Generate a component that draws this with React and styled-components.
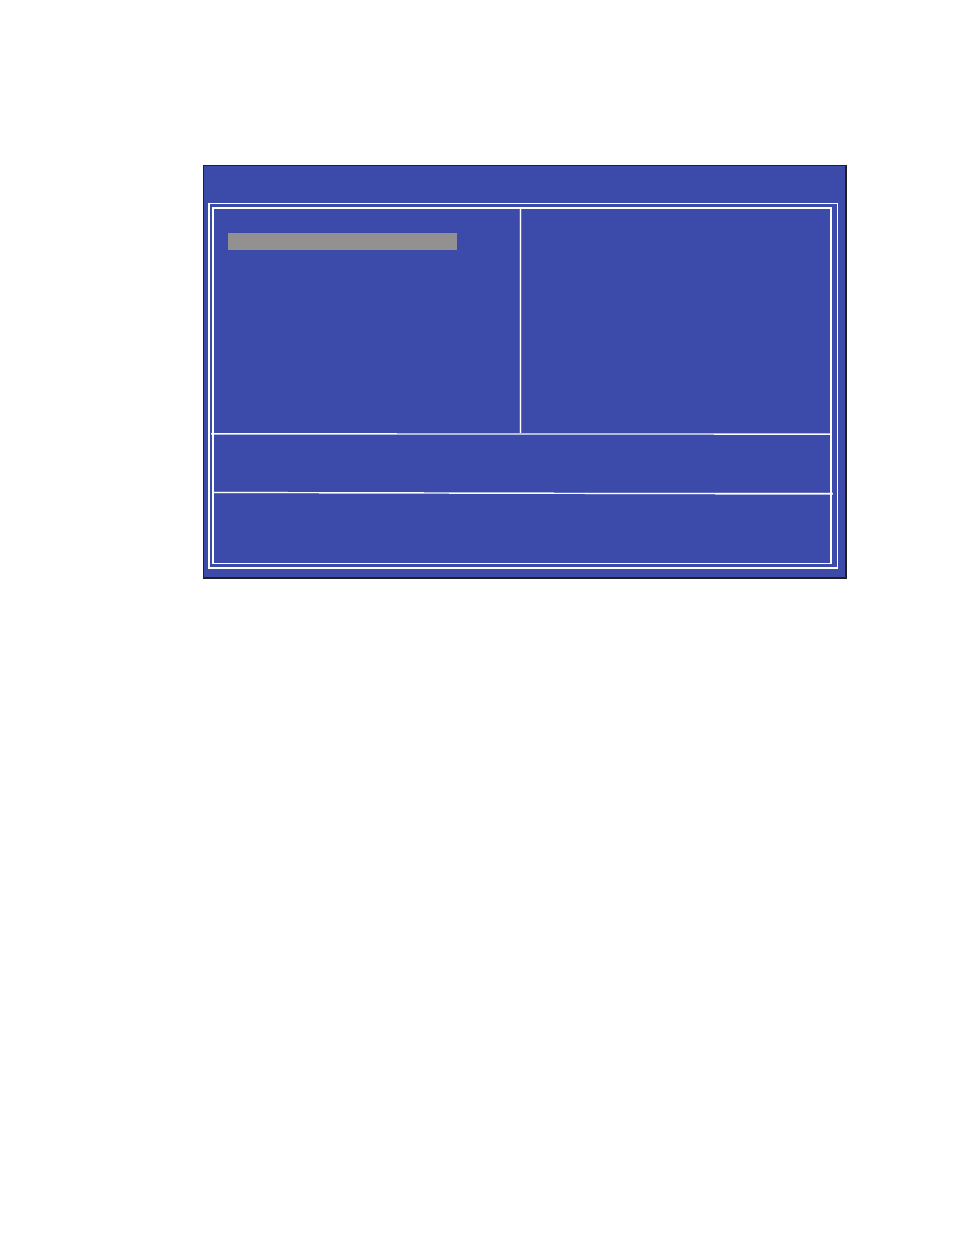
import React from "react";
import styled, { createGlobalStyle } from "styled-components";

const solid = "#ffffff";
const pale = "rgba(255, 255, 255, 0.62)";
const faint = "rgba(255, 255, 255, 0.2)";

const GlobalStyle = createGlobalStyle`
  body {
    margin: 0;
    background: #ffffff;
    font-family: "Liberation Mono", monospace;
  }
`;

const Page = styled.main`
  box-sizing: border-box;
  min-height: 100vh;
  padding: 165px 107px 40px 203px;
`;

const Screen = styled.section`
  background: #3c4ba9;
  border: solid #231f20;
  border-width: 1px 2px 2px 1px;
`;

const TitleBar = styled.header`
  height: 37px;
`;

const OuterFrame = styled.div`
  margin: 0 7px 8px 4px;
  padding: 3px 5px 3px 2px;
  border: solid #ffffff;
  border-width: 1px 1px 2px 2px;
`;

const InnerFrame = styled.div`
  border: solid #ffffff;
  border-width: 2px 2px 1px 2px;
`;

const Columns = styled.div`
  display: grid;
  grid-template-columns: 305px 3px 1fr;
  min-height: 224px;
`;

const MenuColumn = styled.nav`
  padding: 24px 62px 24px 14px;
`;

const SelectedItem = styled.div`
  height: 17px;
  background: #929090;
`;

const ColumnRule = styled.div`
  background: linear-gradient(
    to right,
    ${faint} 1px,
    ${solid} 1px 2px,
    ${faint} 2px
  );
`;

// The rules drift down slightly from left to right, one pixel row at a time.
const KeysRule = styled.div`
  height: 2px;
  margin: 0 -2px 0 -3px;
  background:
    linear-gradient(to right, ${solid} 30%, ${pale} 30%) 0 0 / 100% 1px no-repeat,
    linear-gradient(to right, ${pale} 81%, ${solid} 81%) 0 1px / 100% 1px no-repeat;
`;

const HelpRule = styled.div`
  height: 4px;
  margin-right: -3px;
  background:
    linear-gradient(to right, ${faint} 12%, transparent 12%) 0 0 / 100% 1px no-repeat,
    linear-gradient(to right, ${solid} 34%, ${pale} 34% 55%, ${faint} 55%) 0 1px / 100% 1px no-repeat,
    linear-gradient(to right, ${faint} 17%, ${pale} 17% 38%, ${solid} 38%) 0 2px / 100% 1px no-repeat,
    linear-gradient(to right, transparent 60%, ${faint} 60% 81%, ${pale} 81%) 0 3px / 100% 1px no-repeat;
`;

const KeysPanel = styled.div`
  min-height: 56px;
`;

const HelpPanel = styled.footer`
  min-height: 68px;
`;

function App() {
  return (
    <>
      <GlobalStyle />
      <Page>
        <Screen>
          <TitleBar />
          <OuterFrame>
            <InnerFrame>
              <Columns>
                <MenuColumn>
                  <SelectedItem />
                </MenuColumn>
                <ColumnRule />
              </Columns>
              <KeysRule />
              <KeysPanel />
              <HelpRule />
              <HelpPanel />
            </InnerFrame>
          </OuterFrame>
        </Screen>
      </Page>
    </>
  );
}

export default App;
